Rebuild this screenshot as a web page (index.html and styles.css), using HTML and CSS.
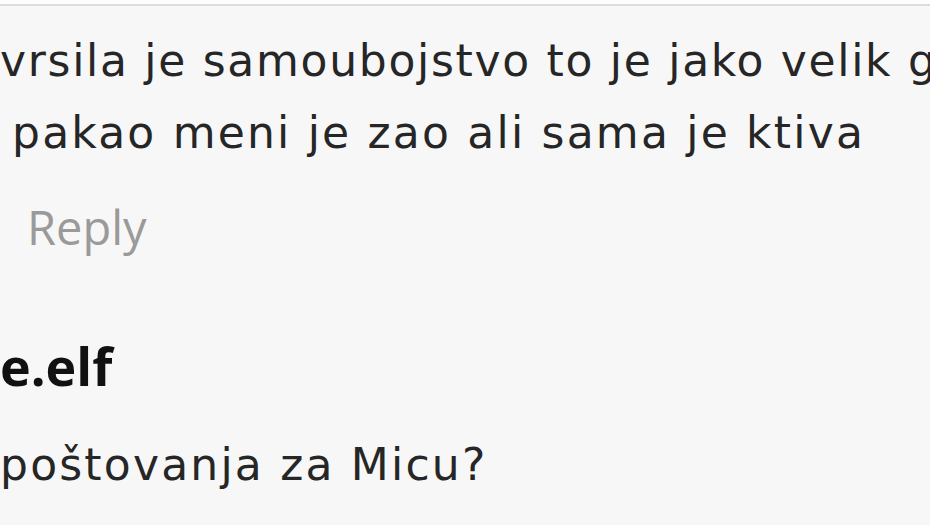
FILE: index.html
```html
<!DOCTYPE html>
<html lang="hr">
<head>
    <meta charset="UTF-8">
    <meta name="viewport" content="width=device-width, initial-scale=1.0">
    <title>Komentari</title>
    <link rel="stylesheet" href="styles.css">
</head>
<body>
    <div class="top-strip"></div>
    <div class="comments">
        <div class="comment">
            <p class="comment-text first">vrsila je samoubojstvo to je jako velik g</p>
            <p class="comment-text second">pakao meni je zao ali sama je ktiva</p>
            <div class="reply">Reply</div>
        </div>
        <div class="comment">
            <div class="username">e.elf</div>
            <p class="comment-text last">poštovanja za Micu?</p>
        </div>
    </div>
</body>
</html>
```

FILE: styles.css
```css
body {
    margin: 0;
    background-color: #f7f7f7;
    font-family: "DejaVu Sans", Arial, sans-serif;
    color: #262626;
    overflow: hidden;
    height: 525px;
}
.top-strip {
    height: 4px;
    background-color: #fdfdfd;
    border-bottom: 2px solid #dcdcdc;
}
.comments {
    white-space: nowrap;
}
.comment-text {
    margin: 0;
    font-size: 44px;
    letter-spacing: 2.2px;
    line-height: 73px;
}
.comment:first-child {
    padding-top: 18px;
}
.first {
    letter-spacing: 1.7px;
}
.second {
    padding-left: 12px;
    line-height: 71px;
}
.reply {
    margin-top: 29px;
    padding-left: 27px;
    font-size: 47px;
    line-height: 60px;
    color: #9a9a9a;
    font-family: "Open Sans", Arial, sans-serif;
}
.username {
    margin-top: 74px;
    font-size: 52px;
    font-weight: bold;
    color: #111111;
    line-height: 70px;
    font-family: "Open Sans", Arial, sans-serif;
}
.last {
    margin-top: 27px;
}
```
